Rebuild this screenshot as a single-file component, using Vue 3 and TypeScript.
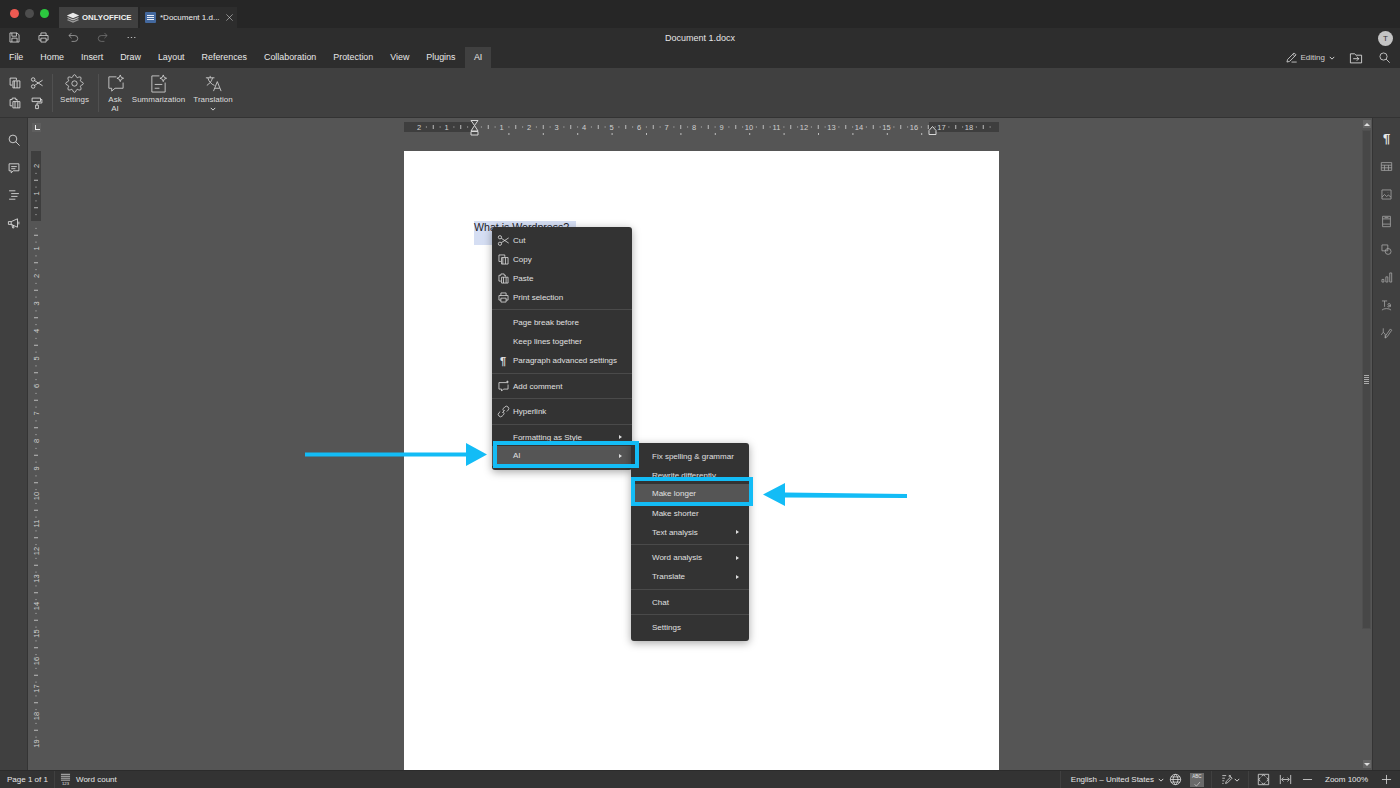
<script setup lang="ts">
type MenuRow = { label?: string; icon?: string; arrow?: boolean; active?: boolean; sep?: boolean };

const CM = 27.5;

// all icons are plain stroked paths on a 20x20 box
const sparkle = 'M15 1l1 2.5 2.5 1-2.5 1-1 2.5-1-2.5-2.5-1 2.5-1z';
const gear = (() => {
  let d = '';
  for (let i = 0; i < 64; i++) {
    const a = (i / 64) * Math.PI * 2;
    const r = 8 + 1.3 * Math.cos(a * 8);
    d += `${i ? 'L' : 'M'}${(10 + r * Math.cos(a)).toFixed(1)} ${(10 + r * Math.sin(a)).toFixed(1)}`;
  }
  return d + 'z M7.2 10a2.8 2.8 0 1 0 5.6 0a2.8 2.8 0 1 0-5.6 0';
})();
const icons: Record<string, string> = {
  save: 'M3 3h11l3 3v11H3z M6 3v5h7V3 M6 17v-6h8v6',
  print: 'M6 7V3h8v4 M6 14H3V7h14v7h-3 M6 11h8v6H6z',
  undo: 'M7 3 3 7l4 4 M3 7h9a4.5 4.5 0 0 1 0 9H7',
  redo: 'M13 3l4 4-4 4 M17 7H8a4.5 4.5 0 0 0 0 9h5',
  dots: 'M4 10h2 M9 10h2 M14 10h2',
  copy: 'M3 3h9v3 M3 3v10h3 M7 7h10v10H7z M9 7v10 M13 7v10',
  cut: 'M2 5a2.5 2.5 0 1 0 5 0a2.5 2.5 0 1 0-5 0 M2 15a2.5 2.5 0 1 0 5 0a2.5 2.5 0 1 0-5 0 M6.5 6.5 18 14 M6.5 13.5 18 6',
  paste: 'M3 5h3V3h5v2h2v2 M3 5v9h3 M7 8h10v9H7z M10 8v9 M14 8v9',
  painter: 'M3 3h12v5H3z M15 5h2v5h-7v3 M8 13h4v5H8z',
  gear,
  ask: `M11 3H3v12h3v3l3.5-3H18V9 ${sparkle}`,
  summary: `M11 2H3v17h14V9 M6 11h8 M6 15h5 ${sparkle}`,
  translate: 'M2 4h9 M6.5 2v2 M4 4c1 4 4 7 7 8 M9 4c-1 4-3 6-6 8 M10 18l4-10 4 10 M11.5 15h5',
  pencil: 'M3 17l1-4L14 3l3 3L7 16z M12 5l3 3 M10 17h8',
  folder: 'M2 4h6l2 2h8v11H2z M6 11h8 M11 8l3 3-3 3',
  search: 'M3 8.5a5.5 5.5 0 1 0 11 0a5.5 5.5 0 1 0-11 0 M12.5 12.5 18 18',
  comment: 'M3 4h14v10H9l-3 3v-3H3z M6 8h8 M6 11h6',
  headings: 'M3 4h9 M6 8h11 M6 12h9 M3 16h9',
  speaker: 'M2 8h4l9-4v12l-9-4H2z M6 8v4 M7 12l1 5h2l-1-4 M17 8v4',
  table: 'M2 4h16v12H2z M2 8h16 M2 12h16 M7 8v8 M13 8v8',
  image: 'M3 3h14v14H3z M3 14l4-4 3 3 3-2 4 3 M12 7h.5',
  header: 'M4 2h12v16H4z M4 6h12 M4 14h12 M7 4h6',
  shape: 'M3 3h9v9H3z M8 13a4.5 4.5 0 1 0 9 0a4.5 4.5 0 1 0-9 0',
  chart: 'M3 13h3v4H3z M9 9h3v8H9z M15 3h3v14h-3z',
  ta: 'M3 3h8 M7 3v9 M12 9a2 2 0 0 1 4 0v3 M16 10c-3 0-4 .5-4 1.5s2 1 4-.5 M3 17c3-3 11-3 14 0',
  sign: 'M5 2v6l3 3 M5 8 2 12 M8 11v6 M16 3 9 13l-1 4 3-2 7-10z',
  words: 'M3 2h14 M3 5h14 M3 8h14 M3 11h14',
  globe: 'M2 10a8 8 0 1 0 16 0a8 8 0 1 0-16 0 M2 10h16 M3 6h14 M3 14h14 M10 2c-5 5-5 11 0 16 M10 2c5 5 5 11 0 16',
  spell: 'M5 15l4 3 7-8',
  track: 'M2 4h6 M2 8h4 M2 12h3 M2 16h2 M7 16l1-3 7-7 2 2-7 7z M12 3l3 3 M15 3l-3 3',
  fitpage: 'M2 2h16v16H2z M7 5l3-2 3 2 M7 15l3 2 3-2 M5 7l-2 3 2 3 M15 7l2 3-2 3',
  fitwidth: 'M2 3v14 M18 3v14 M5 10h10 M7 7l-3 3 3 3 M13 7l3 3-3 3',
  minus: 'M3 10h14',
  plus: 'M3 10h14 M10 3v14',
  link: 'M8 12l4-4 M5 10l-2 2a3 3 0 0 0 5 5l2-2a3 3 0 0 0 0-4 M15 10l2-2a3 3 0 0 0-5-5l-2 2a3 3 0 0 0 0 4',
  addcomment: 'M15 4H3v10h4v3l3-3h7V7 M16 1v4 M14 3h4'
};

const tabs = ['File', 'Home', 'Insert', 'Draw', 'Layout', 'References', 'Collaboration', 'Protection', 'View', 'Plugins', 'AI'];
const leftIcons = ['search', 'comment', 'headings', 'speaker'];
const rightIcons = ['table', 'image', 'header', 'shape', 'chart', 'ta', 'sign'];

const mainMenu: MenuRow[] = [
  { label: 'Cut', icon: 'cut' },
  { label: 'Copy', icon: 'copy' },
  { label: 'Paste', icon: 'paste' },
  { label: 'Print selection', icon: 'print' },
  { sep: true },
  { label: 'Page break before' },
  { label: 'Keep lines together' },
  { label: 'Paragraph advanced settings', icon: 'para' },
  { sep: true },
  { label: 'Add comment', icon: 'addcomment' },
  { sep: true },
  { label: 'Hyperlink', icon: 'link' },
  { sep: true },
  { label: 'Formatting as Style', arrow: true },
  { label: 'AI', arrow: true, active: true }
];
const aiMenu: MenuRow[] = [
  { label: 'Fix spelling & grammar' },
  { label: 'Rewrite differently' },
  { label: 'Make longer', active: true },
  { label: 'Make shorter' },
  { label: 'Text analysis', arrow: true },
  { sep: true },
  { label: 'Word analysis', arrow: true },
  { label: 'Translate', arrow: true },
  { sep: true },
  { label: 'Chat' },
  { sep: true },
  { label: 'Settings' }
];

// ruler marks: label on the cm, long tick on the half, dots on the quarters
const range = (from: number, to: number) => Array.from({ length: to - from + 1 }, (_, i) => from + i);
const hLabels = range(-2, 18).filter((n) => n !== 0);
const vLabels = range(-2, 19).filter((n) => n !== 0);
const quarters = (from: number, to: number) => range(from * 4, to * 4).filter((q) => q % 4 !== 0);
const tabStops = range(1, 13).map((n) => 70 + n * 34.4);
</script>

<template>
  <div class="app">
    <div class="titlebar">
      <div class="lights">
        <i class="light red"></i>
        <i class="light grey"></i>
        <i class="light green"></i>
      </div>
      <div class="tab-home">
        <svg class="logo" viewBox="0 0 20 16">
          <path d="M10 1 19 5l-9 4-9-4z" />
          <path class="soft" d="M3 7.5 10 10.6l7-3.1 2 1-9 4-9-4z" />
          <path class="softer" d="M3 10.5 10 13.6l7-3.1 2 1-9 4-9-4z" />
        </svg>
        <span>ONLYOFFICE</span>
      </div>
      <div class="tab-doc">
        <span class="doc-icon"><i></i><i></i><i></i></span>
        <span class="doc-name">*Document 1.d...</span>
        <svg class="ic close" viewBox="0 0 20 20"><path d="M3 3l14 14 M17 3 3 17" /></svg>
      </div>
    </div>

    <div class="quickbar">
      <div class="quick-icons">
        <svg class="ic" viewBox="0 0 20 20"><path :d="icons.save" /></svg>
        <svg class="ic" viewBox="0 0 20 20"><path :d="icons.print" /></svg>
        <svg class="ic dim" viewBox="0 0 20 20"><path :d="icons.undo" /></svg>
        <svg class="ic dimmer" viewBox="0 0 20 20"><path :d="icons.redo" /></svg>
        <svg class="ic" viewBox="0 0 20 20"><path :d="icons.dots" /></svg>
      </div>
      <span class="doc-title">Document 1.docx</span>
      <span class="avatar">T</span>
    </div>

    <div class="tabbar">
      <div class="tabs">
        <span v-for="tab in tabs" :key="tab" class="tab" :class="{ current: tab === 'AI' }">{{ tab }}</span>
      </div>
      <div class="tab-right">
        <svg class="ic" viewBox="0 0 20 20"><path :d="icons.pencil" /></svg>
        <span class="editing">Editing</span>
        <svg class="chev" viewBox="0 0 8 5"><path d="M1 1l3 3 3-3" /></svg>
        <svg class="ic folder" viewBox="0 0 20 20"><path :d="icons.folder" /></svg>
        <svg class="ic search" viewBox="0 0 20 20"><path :d="icons.search" /></svg>
      </div>
    </div>

    <div class="toolbar">
      <div class="clip">
        <svg class="ic" viewBox="0 0 20 20"><path :d="icons.copy" /></svg>
        <svg class="ic" viewBox="0 0 20 20"><path :d="icons.cut" /></svg>
        <svg class="ic" viewBox="0 0 20 20"><path :d="icons.paste" /></svg>
        <svg class="ic" viewBox="0 0 20 20"><path :d="icons.painter" /></svg>
      </div>
      <i class="tool-sep"></i>
      <div class="tool w-settings">
        <svg class="big" viewBox="0 0 20 20"><path :d="icons.gear" /></svg>
        <span>Settings</span>
      </div>
      <i class="tool-sep"></i>
      <div class="tool w-ask">
        <svg class="big" viewBox="0 0 20 20"><path :d="icons.ask" /></svg>
        <span>Ask<br />AI</span>
      </div>
      <div class="tool w-sum">
        <svg class="big" viewBox="0 0 20 20"><path :d="icons.summary" /></svg>
        <span>Summarization</span>
      </div>
      <div class="tool w-trans">
        <svg class="big" viewBox="0 0 20 20"><path :d="icons.translate" /></svg>
        <span>Translation</span>
        <svg class="chev" viewBox="0 0 8 5"><path d="M1 1l3 3 3-3" /></svg>
      </div>
    </div>

    <div class="workspace">
      <aside class="side left">
        <svg v-for="name in leftIcons" :key="name" class="ic" viewBox="0 0 20 20"><path :d="icons[name]" /></svg>
      </aside>

      <div class="vruler">
        <span class="corner"><i></i></span>
        <svg class="vruler-svg" width="14" height="652" viewBox="0 0 14 652">
          <rect x="3" y="33" width="10" height="70" class="margin" />
          <template v-for="q in quarters(-2, 19)" :key="q">
            <rect v-if="q % 2 === 0" x="6" :y="103 + (q * 27.5) / 4" width="4" height="1" class="tick" />
            <rect v-else x="7.5" :y="103 + (q * 27.5) / 4" width="1" height="1" class="tick" />
          </template>
          <text
            v-for="n in vLabels"
            :key="n"
            class="rule-num"
            :transform="`translate(8 ${103 + n * CM}) rotate(-90)`"
            text-anchor="middle"
            dy="2.5"
          >{{ Math.abs(n) }}</text>
        </svg>
      </div>

      <main class="canvas">
        <svg class="hruler" width="595" height="33" viewBox="0 0 595 33">
          <rect x="0" y="4" width="70" height="10" class="margin" />
          <rect x="525" y="4" width="70" height="10" class="margin" />
          <template v-for="q in quarters(-2, 19)" :key="q">
            <rect v-if="q % 2 === 0" :x="70 + (q * CM) / 4" y="7" width="1" height="4" class="tick" />
            <rect v-else :x="70 + (q * CM) / 4" y="8.5" width="1" height="1" class="tick" />
          </template>
          <text v-for="n in hLabels" :key="n" class="rule-num" :x="70 + n * CM" y="11.5" text-anchor="middle">{{ Math.abs(n) }}</text>
          <rect v-for="x in tabStops" :key="x" :x="x" y="15" width="1" height="2" class="tick" />
          <path class="marker" d="M67 2.5h7l-3.5 5 3.5 5.5h-7l3.5-5.5z M67 13.5h7v3.5h-7z" />
          <path class="marker" d="M525 12.5l3.5-4 3.5 4v4h-7z" />
        </svg>
        <div class="page">
          <div class="selected">What is Wordpress?</div>
        </div>
      </main>

      <div class="scrollbar">
        <span class="sb-btn"><i class="up"></i></span>
        <div class="sb-thumb"><i></i></div>
        <span class="sb-btn"><i class="down"></i></span>
      </div>

      <aside class="side right">
        <span class="pilcrow">¶</span>
        <svg v-for="name in rightIcons" :key="name" class="ic dim" viewBox="0 0 20 20"><path :d="icons[name]" /></svg>
      </aside>
    </div>

    <footer class="statusbar">
      <span class="page-count">Page 1 of 1</span>
      <i class="st-sep"></i>
      <svg class="ic words" viewBox="0 0 20 20"><path :d="icons.words" /><text x="10" y="19" text-anchor="middle">123</text></svg>
      <span class="word-count">Word count</span>
      <i class="st-sep push"></i>
      <span class="lang">English – United States</span>
      <svg class="chev" viewBox="0 0 8 5"><path d="M1 1l3 3 3-3" /></svg>
      <svg class="ic globe" viewBox="0 0 20 20"><path :d="icons.globe" /></svg>
      <span class="spell">
        <span>ABC</span>
        <svg viewBox="0 0 20 20"><path :d="icons.spell" /></svg>
      </span>
      <i class="st-sep"></i>
      <svg class="ic track" viewBox="0 0 20 20"><path :d="icons.track" /></svg>
      <svg class="chev track-chev" viewBox="0 0 8 5"><path d="M1 1l3 3 3-3" /></svg>
      <i class="st-sep"></i>
      <svg class="ic fit first" viewBox="0 0 20 20"><path :d="icons.fitpage" /></svg>
      <svg class="ic fit" viewBox="0 0 20 20"><path :d="icons.fitwidth" /></svg>
      <svg class="ic fit" viewBox="0 0 20 20"><path :d="icons.minus" /></svg>
      <span class="zoom">Zoom 100%</span>
      <svg class="ic plus" viewBox="0 0 20 20"><path :d="icons.plus" /></svg>
    </footer>

    <!-- popups and annotation sit over the document -->
    <ul class="menu menu-main">
      <template v-for="(row, i) in mainMenu" :key="i">
        <li v-if="row.sep" class="sep"></li>
        <li v-else class="row" :class="{ active: row.active }">
          <span class="row-icon">
            <template v-if="row.icon === 'para'">¶</template>
            <svg v-else-if="row.icon" viewBox="0 0 20 20"><path :d="icons[row.icon]" /></svg>
          </span>
          <span>{{ row.label }}</span>
          <i v-if="row.arrow" class="caret"></i>
        </li>
      </template>
    </ul>

    <ul class="menu menu-ai">
      <template v-for="(row, i) in aiMenu" :key="i">
        <li v-if="row.sep" class="sep"></li>
        <li v-else class="row" :class="{ active: row.active }">
          <span class="row-icon"></span>
          <span>{{ row.label }}</span>
          <i v-if="row.arrow" class="caret"></i>
        </li>
      </template>
    </ul>

    <div class="callout callout-ai"></div>
    <div class="callout callout-longer"></div>
    <svg class="arrows" width="1400" height="788" viewBox="0 0 1400 788">
      <path d="M305 452.5H466V443L487 454.5 466 466V456.5H305z" />
      <path d="M907 494V498L785 497.5V506L763 494.5 785 483V492.5z" />
    </svg>
  </div>
</template>

<style scoped>
.app {
  position: relative;
  width: 1400px;
  height: 788px;
  overflow: hidden;
  display: flex;
  flex-direction: column;
  background: #404040;
  color: #e6e6e6;
  font-family: 'Liberation Sans', Arial, sans-serif;
  font-size: 8px;
}
i {
  display: block;
}
svg path {
  fill: none;
  stroke: #e2e2e2;
  stroke-width: 1.2;
}
.ic {
  width: 13px;
  height: 13px;
  flex: none;
}
.dim path {
  stroke: #a8a8a8;
}
.dimmer path {
  stroke: #777;
}
.chev {
  width: 6px;
  height: 4px;
  flex: none;
}

.titlebar {
  height: 28px;
  flex: none;
  display: flex;
  align-items: flex-end;
  background: #262626;
}
.lights {
  display: flex;
  gap: 6px;
  width: 59px;
  padding: 0 0 10px 10px;
  box-sizing: border-box;
}
.light {
  width: 9px;
  height: 9px;
  border-radius: 50%;
}
.red {
  background: #ee5a52;
}
.grey {
  background: #4d4d4d;
}
.green {
  background: #2cc83f;
}
.tab-home {
  width: 79px;
  height: 21px;
  display: flex;
  align-items: center;
  gap: 2px;
  padding-left: 7px;
  box-sizing: border-box;
  background: #404040;
  font-size: 7.8px;
  font-weight: 700;
  color: #f0f0f0;
  white-space: nowrap;
}
.logo {
  width: 14px;
  height: 11px;
}
.logo path {
  fill: #e8e8e8;
  stroke: none;
}
.logo .soft {
  fill: #c4c4c4;
}
.logo .softer {
  fill: #9c9c9c;
}
.tab-doc {
  width: 97px;
  height: 21px;
  margin-left: 2px;
  display: flex;
  align-items: center;
  padding-left: 5px;
  box-sizing: border-box;
  background: #2d2d2d;
  white-space: nowrap;
}
.doc-icon {
  width: 11px;
  height: 11px;
  display: flex;
  flex-direction: column;
  justify-content: center;
  gap: 1px;
  padding: 0 2px;
  box-sizing: border-box;
  background: #44699f;
  border-radius: 1px;
  margin-right: 4px;
}
.doc-icon i {
  height: 1px;
  background: #e8eef8;
}
.doc-name {
  width: 65px;
  color: #eee;
}
.close {
  width: 9px;
  height: 9px;
}

.quickbar {
  position: relative;
  height: 19px;
  flex: none;
  display: flex;
  align-items: center;
  background: #2d2d2d;
}
.quick-icons {
  display: flex;
  gap: 16.3px;
  padding-left: 8px;
}
.doc-title {
  position: absolute;
  left: 0;
  right: 0;
  text-align: center;
  font-size: 9px;
}
.avatar {
  position: absolute;
  right: 7px;
  top: 3px;
  width: 15px;
  height: 15px;
  border-radius: 50%;
  background: #c4c4c4;
  color: #333;
  text-align: center;
  line-height: 15px;
}

.tabbar {
  height: 21px;
  flex: none;
  display: flex;
  justify-content: space-between;
  background: #2d2d2d;
}
.tabs {
  display: flex;
  padding-left: 0.5px;
}
.tab {
  padding: 0 8.5px;
  line-height: 21px;
  font-size: 8.9px;
  color: #e8e8e8;
}
.tab.current {
  padding: 0 9px;
  margin-left: 1px;
  background: #404040;
}
.tab-right {
  display: flex;
  align-items: center;
  padding-right: 9px;
}
.editing {
  margin: 0 4px 0 3px;
  color: #cfcfcf;
}
.folder {
  width: 14px;
  height: 14px;
  margin-left: 14px;
}
.search {
  margin-left: 15px;
}

.toolbar {
  height: 49px;
  flex: none;
  display: flex;
  background: #404040;
  border-bottom: 1px solid #333;
  box-sizing: content-box;
}
.clip {
  width: 52px;
  display: grid;
  grid-template-columns: 22px 22px;
  grid-auto-rows: 20px;
  padding: 8px 0 0 8px;
  box-sizing: border-box;
}
.clip .ic {
  width: 14px;
  height: 14px;
}
.tool-sep {
  width: 1px;
  height: 38px;
  margin-top: 6px;
  flex: none;
  background: #505050;
}
.tool {
  display: flex;
  flex-direction: column;
  align-items: center;
  padding-top: 6px;
  box-sizing: border-box;
  text-align: center;
  line-height: 9px;
  color: #dcdcdc;
  flex: none;
}
.tool .big {
  width: 19px;
  height: 19px;
  margin-bottom: 2px;
}
.tool .big path {
  stroke: #d4d4d4;
  stroke-width: 0.9;
}
.tool .chev {
  margin-top: 3px;
}
.w-settings {
  width: 45px;
  padding-right: 2px;
}
.w-ask {
  width: 32px;
}
.w-sum {
  width: 55px;
  white-space: nowrap;
}
.w-trans {
  width: 50px;
  margin-left: 2px;
}

.workspace {
  flex: 1;
  min-height: 0;
  display: flex;
  background: #555;
}
.side {
  width: 28px;
  flex: none;
  display: flex;
  flex-direction: column;
  align-items: center;
  gap: 14.7px;
  padding-top: 15px;
  box-sizing: border-box;
  background: #404040;
}
.side.left {
  border-right: 1px solid #343434;
  gap: 13.7px;
}
.side.left .ic {
  width: 14px;
  height: 14px;
}
.side.right {
  border-left: 1px solid #343434;
  gap: 14.8px;
  padding-top: 13px;
}
.pilcrow {
  height: 16px;
  line-height: 16px;
  font-size: 13px;
  font-weight: 700;
  color: #e8e8e8;
  margin-bottom: -2px;
}

.vruler {
  position: relative;
  width: 14px;
  flex: none;
}
.corner {
  position: absolute;
  left: 4px;
  top: 5px;
  width: 9px;
  height: 9px;
  background: #5e5e5e;
}
.corner i {
  width: 4px;
  height: 4px;
  margin: 2px 0 0 3px;
  border-left: 1px solid #eee;
  border-bottom: 1px solid #eee;
}
.vruler-svg {
  display: block;
}
.margin {
  fill: #3e3e3e;
}
.tick {
  fill: #bdbdbd;
}
.rule-num {
  font-size: 7.5px;
  fill: #d0d0d0;
}
.marker {
  stroke: #d8d8d8;
  fill: #4a4a4a;
  stroke-width: 1;
}

.canvas {
  flex: 1;
  min-width: 0;
  display: flex;
  flex-direction: column;
  align-items: center;
}
.hruler {
  display: block;
  flex: none;
}
.page {
  width: 595px;
  flex: 1;
  padding: 70px 0 0 70px;
  box-sizing: border-box;
  background: #fff;
}
.selected {
  width: 102px;
  height: 24px;
  background: #d5def3;
  color: #1d1d2a;
  font-size: 10.6px;
  line-height: 13px;
}

.scrollbar {
  width: 11px;
  flex: none;
  display: flex;
  flex-direction: column;
  align-items: center;
  padding-top: 2px;
  box-sizing: border-box;
}
.sb-btn {
  width: 8px;
  height: 8px;
  flex: none;
  display: flex;
  align-items: center;
  justify-content: center;
  background: #666;
}
.sb-btn i {
  border-left: 3px solid transparent;
  border-right: 3px solid transparent;
}
.sb-btn .up {
  border-bottom: 3px solid #ddd;
}
.sb-btn .down {
  border-top: 3px solid #ddd;
}
.sb-thumb {
  width: 9px;
  height: 499px;
  margin: 2px 0 auto;
  background: #474747;
  border: 1px solid #4f4f4f;
  box-sizing: border-box;
  display: flex;
  justify-content: center;
  padding-top: 244px;
}
.sb-thumb i {
  width: 5px;
  height: 9px;
  background: repeating-linear-gradient(#aaa 0 1px, transparent 1px 2px);
}
.scrollbar .sb-btn:last-child {
  margin-bottom: 2px;
}

.statusbar {
  height: 18px;
  flex: none;
  display: flex;
  align-items: center;
  background: #333;
  border-top: 1px solid #2b2b2b;
  box-sizing: border-box;
  color: #e6e6e6;
  padding-left: 7px;
}
.page-count {
  width: 47px;
}
.st-sep {
  width: 1px;
  height: 18px;
  background: #404040;
  flex: none;
}
.st-sep.push {
  margin-left: auto;
  margin-right: 10px;
}
.words {
  margin: 0 4px 0 4px;
}
.words text {
  font-size: 6.5px;
  fill: #e6e6e6;
}
.lang {
  margin-right: 4px;
}
.globe {
  margin: 0 8.5px 0 4.5px;
}
.spell {
  width: 14px;
  height: 14px;
  margin-right: 7px;
  position: relative;
  background: #6a6a6a;
  font-size: 4.5px;
  text-align: center;
  line-height: 7px;
  display: block;
}
.spell svg {
  position: absolute;
  left: 2px;
  top: 4px;
  width: 10px;
  height: 10px;
}
.track {
  margin-left: 8.5px;
}
.track-chev {
  margin: 0 8px 0 0.5px;
}
.fit {
  margin-left: 9px;
}
.fit.first {
  margin-left: 7.5px;
}
.zoom {
  margin-left: 11.5px;
  width: 54.5px;
}
.plus {
  margin-right: 7.5px;
}

.menu {
  position: absolute;
  margin: 0;
  padding: 3.5px 0 3px;
  list-style: none;
  background: #333;
  border-radius: 3px;
  box-shadow: 0 2px 9px rgba(0, 0, 0, 0.35);
  color: #e0e0e0;
  box-sizing: border-box;
}
.menu-main {
  left: 492px;
  top: 227px;
  width: 140px;
  height: 243px;
}
.menu-ai {
  left: 631px;
  top: 443px;
  width: 118px;
  height: 198px;
}
.row {
  position: relative;
  height: 19px;
  display: flex;
  align-items: center;
  white-space: nowrap;
}
.row.active {
  background: #555;
  height: 20px;
  margin-top: -1px;
}
.row-icon {
  width: 21px;
  flex: none;
  display: flex;
  justify-content: center;
  padding-left: 1px;
  box-sizing: border-box;
  font-size: 11px;
  font-weight: 700;
}
.row-icon svg {
  width: 13px;
  height: 13px;
}
.sep {
  height: 6.5px;
  display: flex;
  align-items: center;
}
.sep::before {
  content: '';
  flex: 1;
  height: 1px;
  background: #4a4a4a;
}
.caret {
  position: absolute;
  right: 10px;
  top: 50%;
  margin-top: -2px;
  border-left: 3px solid #ddd;
  border-top: 2px solid transparent;
  border-bottom: 2px solid transparent;
}

.callout {
  position: absolute;
  border: 4px solid #13bcf6;
  box-sizing: border-box;
}
.callout-ai {
  left: 493px;
  top: 441px;
  width: 146px;
  height: 27px;
}
.callout-longer {
  left: 631px;
  top: 477px;
  width: 122px;
  height: 29px;
}
.arrows {
  position: absolute;
  left: 0;
  top: 0;
  pointer-events: none;
}
.arrows path {
  fill: #13bcf6;
  stroke: none;
}
</style>

<style>
html,
body {
  margin: 0;
  overflow: hidden;
}
</style>
